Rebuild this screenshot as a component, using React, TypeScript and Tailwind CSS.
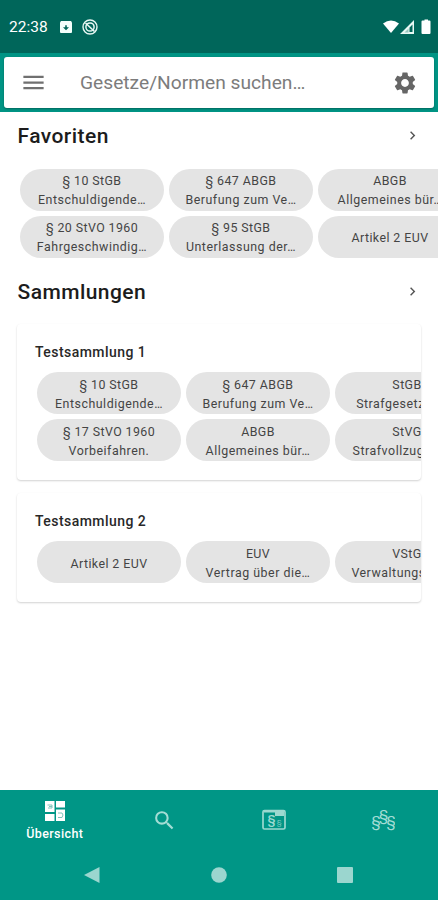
import React from "react";
import { MdMenu, MdSettings, MdSearch, MdChevronRight } from "react-icons/md";

type Item = { title: string; sub?: string };

const favorites: Item[][] = [
  [
    { title: "§ 10 StGB", sub: "Entschuldigende…" },
    { title: "§ 647 ABGB", sub: "Berufung zum Ve…" },
    { title: "ABGB", sub: "Allgemeines bür…" },
  ],
  [
    { title: "§ 20 StVO 1960", sub: "Fahrgeschwindig…" },
    { title: "§ 95 StGB", sub: "Unterlassung der…" },
    { title: "Artikel 2 EUV" },
  ],
];

const collectionOne: Item[][] = [
  [
    { title: "§ 10 StGB", sub: "Entschuldigende…" },
    { title: "§ 647 ABGB", sub: "Berufung zum Ve…" },
    { title: "StGB", sub: "Strafgesetzbuch." },
  ],
  [
    { title: "§ 17 StVO 1960", sub: "Vorbeifahren." },
    { title: "ABGB", sub: "Allgemeines bür…" },
    { title: "StVG", sub: "Strafvollzugsges…" },
  ],
];

const collectionTwo: Item[][] = [
  [
    { title: "Artikel 2 EUV" },
    { title: "EUV", sub: "Vertrag über die…" },
    { title: "VStG", sub: "Verwaltungsstraf…" },
  ],
];

function Chip({ title, sub, nested }: Item & { nested?: boolean }) {
  return (
    <div
      className={`flex h-[42px] w-[144px] shrink-0 flex-col items-center justify-center rounded-full bg-[#e4e4e4] text-[12.4px] leading-[19px] whitespace-nowrap text-[#444] ${nested ? "pt-[2px]" : "pt-0"}`}
    >
      <span className="tracking-[0.42px]">{title}</span>
      {sub && <span className="tracking-[0.52px]">{sub}</span>}
    </div>
  );
}

function ChipGrid({ rows, nested }: { rows: Item[][]; nested?: boolean }) {
  return (
    <div className="flex flex-col gap-[5px] overflow-hidden">
      {rows.map((row, i) => (
        <div key={i} className="flex gap-[5px]">
          {row.map((item) => (
            <Chip key={item.title} {...item} nested={nested} />
          ))}
        </div>
      ))}
    </div>
  );
}

function SectionHeader({ title }: { title: string }) {
  return (
    <div className="flex h-[28px] items-center justify-between pr-[17px] pl-[17.5px]">
      <h2 className="pt-[3px] text-[21px] font-medium tracking-[0.45px] text-[#1c1c1c]">{title}</h2>
      <MdChevronRight className="size-[17px] text-[#555]" />
    </div>
  );
}

function Collection({ title, rows }: { title: string; rows: Item[][] }) {
  return (
    <section className="mx-[17px] overflow-hidden rounded-[4px] bg-white pt-[18px] pb-[19px] shadow-[0_1px_2px_rgba(0,0,0,0.18)]">
      <h3 className="mb-[10px] pl-[18px] text-[14px] leading-[20px] font-medium tracking-[0.45px] text-[#282828]">
        {title}
      </h3>
      <div className="pl-[20px]">
        <ChipGrid rows={rows} nested />
      </div>
    </section>
  );
}

function StatusBar() {
  return (
    <div className="flex h-[53px] items-center justify-between bg-[#00665a] pr-[7px] pl-[9px] text-white">
      <div className="flex items-center">
        <span className="w-[51px] text-[15.5px] leading-[18px]">22:38</span>
        <svg className="size-[12px]" viewBox="0 0 12 12">
          <path fill="#f4fffc" d="M1 0h10l1 1.500V11a1 1 0 0 1-1 1H1a1 1 0 0 1-1-1V1.500Z" />
          <path fill="#00665a" d="M5.200 4.200h1.600v2H9L6 9.200 3 6.200h2.200Z" />
        </svg>
        <svg className="ml-[10px] size-[16px]" viewBox="0 0 16 16" fill="none" stroke="#e8f8f4">
          <circle cx="8" cy="8" r="7" strokeWidth="1.400" />
          <circle cx="8" cy="8" r="4.100" strokeWidth="1.500" />
          <path strokeWidth="1.600" d="m3.500 4 9 8.500" />
        </svg>
      </div>
      <svg className="h-[16px] w-[48px]" viewBox="0 0 48 16">
        <path fill="white" d="M0 4.500Q8 -1.500 16 4.500L8 14Z" />
        <path fill="#e8f8f4" fillRule="evenodd" d="M31 1V15H17ZM29.500 5.500 26.500 8.500V13h3Z" />
        <path fill="#00665a" fillOpacity="0.350" d="M25.500 9.500V13.500H21.500Z" />
        <path fill="white" d="M40 1.500h1.500V0.500h3.500V1.500H46.500a1 1 0 0 1 1 1V14a1 1 0 0 1-1 1H39.500a1 1 0 0 1-1-1V2.500a1 1 0 0 1 1-1Z" />
      </svg>
    </div>
  );
}

function SearchBar() {
  return (
    <div className="h-[59px] bg-[#009484] px-[4px] pt-[4px]">
      <div className="flex h-[51px] items-center rounded-[3px] bg-white pr-[16px] pl-[16px] shadow-[0_1px_2px_rgba(0,0,0,0.3)]">
        <MdMenu className="size-[27px] text-[#707070]" />
        <span className="ml-[33px] flex-1 pt-[2px] text-[19.2px] text-[#7c7c7c]">Gesetze/Normen suchen…</span>
        <MdSettings className="size-[26px] text-[#666]" />
      </div>
    </div>
  );
}

function OverviewIcon() {
  return (
    <svg className="size-[22px]" viewBox="0 0 22 22">
      <path fill="white" d="M1 1h9.500v11H1ZM12 1h9v6.500h-9ZM1 14h9.500v7H1ZM12 9.500h9V21h-9Z" />
      <g fill="none" stroke="#7fc4bb" strokeWidth="1">
        <path d="M3.500 5h4.500v3H4M5 6.500h3M14 13h4l1 2-1 2.500h-4" />
      </g>
    </svg>
  );
}

function CardIcon() {
  return (
    <svg className="h-[22px] w-[24px]" viewBox="0 0 24 22">
      <rect x="1" y="1.500" width="22" height="18.500" rx="1.500" fill="none" stroke="#9bd9d0" strokeWidth="1.700" />
      <path fill="#9bd9d0" d="M13 2h9v5h-9ZM2 2h11v1.500H2Z" />
      <text x="5.500" y="15.300" fontSize="13" fontWeight="500" fill="#9bd9d0">§</text>
      <text x="14.800" y="16" fontSize="8" fill="#7fcac0">§</text>
    </svg>
  );
}

function ParagraphsIcon() {
  return (
    <svg className="h-[24px] w-[24px]" viewBox="0 0 24 24" fill="#a3ddd5">
      <text x="0.500" y="18.500" fontSize="15">§</text>
      <text x="8" y="12.500" fontSize="15">§</text>
      <text x="15.500" y="18.500" fontSize="15">§</text>
    </svg>
  );
}

function BottomBar() {
  return (
    <footer className="h-[110px] bg-[#009686]">
      <nav className="grid h-[60px] grid-cols-4">
        <div className="flex flex-col items-center pt-[10px] text-white">
          <OverviewIcon />
          <span className="mt-[4px] text-[12.5px] leading-[16px] font-medium tracking-[0.4px]">Übersicht</span>
        </div>
        <div className="flex items-center justify-center">
          <MdSearch className="size-[25px] text-[#a3ddd5]" />
        </div>
        <div className="flex items-center justify-center">
          <CardIcon />
        </div>
        <div className="flex items-center justify-center">
          <ParagraphsIcon />
        </div>
      </nav>
      <div className="flex h-[50px] items-start justify-between pt-[16px] pr-[84px] pl-[83px]">
        <svg className="size-[18px]" viewBox="0 0 18 18" fill="#9bd6cf">
          <path d="M16.500 1v16L1 9Z" />
        </svg>
        <svg className="size-[18px]" viewBox="0 0 18 18" fill="#9bd6cf">
          <circle cx="9" cy="9" r="7.800" />
        </svg>
        <svg className="size-[18px]" viewBox="0 0 18 18" fill="#9bd6cf">
          <rect x="1" y="1" width="16" height="16" rx="1" />
        </svg>
      </div>
    </footer>
  );
}

export default function App() {
  return (
    <div className="flex h-[900px] w-[438px] flex-col overflow-hidden bg-white font-[Roboto,'Noto_Sans',sans-serif]">
      <StatusBar />
      <SearchBar />
      <main className="flex-1 overflow-hidden pt-[9px]">
        <SectionHeader title="Favoriten" />
        <div className="mt-[20px] mb-[19px] pl-[20px]">
          <ChipGrid rows={favorites} />
        </div>
        <SectionHeader title="Sammlungen" />
        <div className="mt-[19px] flex flex-col gap-[13px]">
          <Collection title="Testsammlung 1" rows={collectionOne} />
          <Collection title="Testsammlung 2" rows={collectionTwo} />
        </div>
      </main>
      <BottomBar />
    </div>
  );
}
